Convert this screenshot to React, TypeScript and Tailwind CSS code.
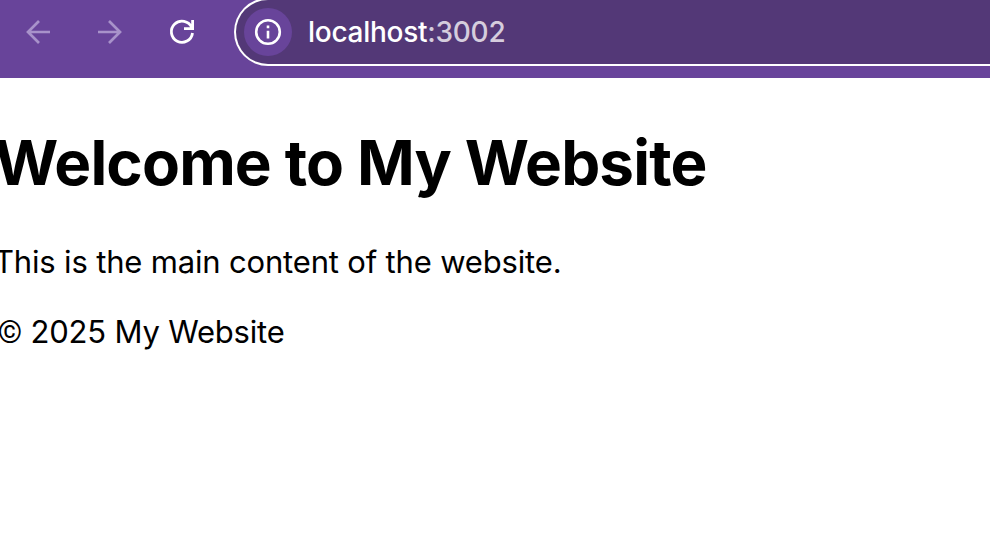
export default function App() {
  return (
    <div className="h-[544px] w-[990px] overflow-hidden bg-white font-['Inter',sans-serif] text-black">
      <header className="flex h-[78px] items-start overflow-hidden bg-[#68449a]">
        <nav className="flex h-16 w-[234px] shrink-0 items-center">
          <svg className="ml-[22px] size-8 shrink-0" viewBox="0 0 32 32" fill="none" stroke="#a892ca" strokeWidth="2.7">
            <path d="M28 16H6.5M17 5L6 16L17 27" />
          </svg>
          <svg className="ml-10 size-8 shrink-0" viewBox="0 0 32 32" fill="none" stroke="#a892ca" strokeWidth="2.7">
            <path d="M4 16H25.5M15 5L26 16L15 27" />
          </svg>
          <svg className="ml-10 size-8 shrink-0" viewBox="0 0 32 32" fill="none" stroke="white" strokeWidth="2.8">
            <path d="M25.7 11.5A10.6 10.6 0 1 0 26.5 17M26.6 4V12.6H18" />
          </svg>
        </nav>
        <div className="-mt-0.5 flex h-[68px] w-[756px] shrink-0 items-center rounded-l-full border-2 border-r-0 border-white bg-[#533877] pl-2">
          <div className="flex size-12 items-center justify-center rounded-full bg-[#68449a]">
            <svg className="size-7" viewBox="0 0 28 28" fill="none" stroke="white" strokeWidth="2.6">
              <circle cx="14" cy="14" r="11.8" />
              <path d="M14 12.7V20.5M14 7.6V10.2" />
            </svg>
          </div>
          <div className="ml-4 text-[28px] leading-8 font-medium tracking-[-0.27px] text-white">localhost<span className="text-[#d5cddd]">:3002</span></div>
        </div>
      </header>
      <main>
        <h1 className="-ml-1.5 mt-[46px] whitespace-nowrap text-[62px] leading-[78px] font-bold tracking-[-0.87px]">Welcome to My Website</h1>
        <p className="-ml-1.5 mt-[41px] text-[31px] leading-[38px] tracking-[-0.17px]">This is the main content of the website.</p>
        <p className="-ml-1.5 mt-8 text-[31px] leading-[38px] tracking-[-0.2px]"><span className="inline-block w-[28px] text-right font-['Roboto',sans-serif]">©</span> 2025 My Website</p>
      </main>
    </div>
  );
}
